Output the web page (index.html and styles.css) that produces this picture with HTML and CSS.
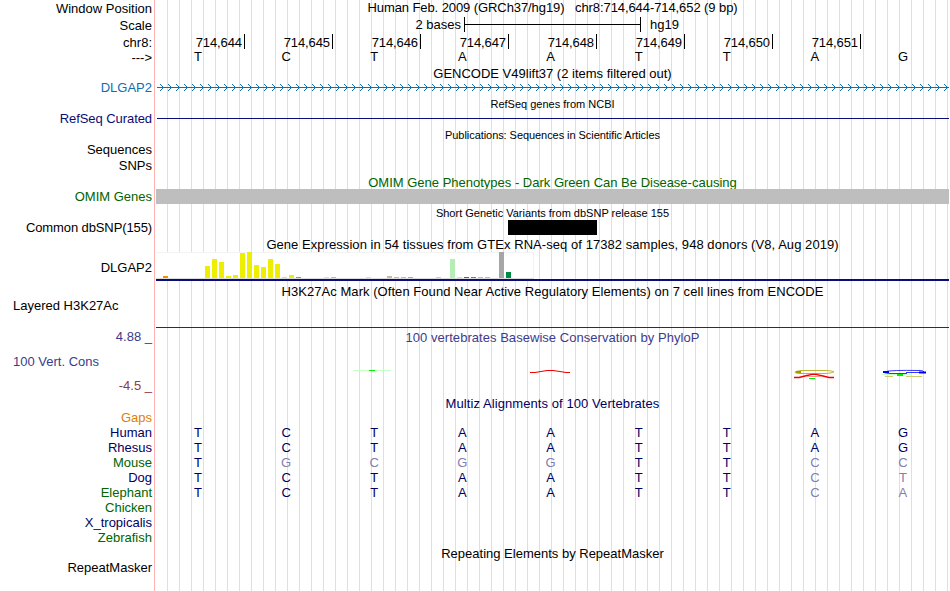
FILE: index.html
```
<!DOCTYPE html>
<html lang="en">
<head>
  <meta charset="UTF-8">
  <title>Human chr8:714,644-714,652 - Genome Browser</title>
  <link rel="stylesheet" href="styles.css">
</head>
<body>
  <main class="browser">
    <div class="row row-position">
      <div class="label">Window Position</div>
      <div class="track title t-position">Human Feb. 2009 (GRCh37/hg19) &nbsp; chr8:714,644-714,652 (9 bp)</div>
    </div>
    <div class="row row-scale">
      <div class="label">Scale</div>
      <div class="track scale">
        <span class="scale-size">2 bases</span>
        <span class="scale-bar"></span>
        <span>hg19</span>
      </div>
    </div>
    <div class="row row-ruler">
      <div class="label">chr8:</div>
      <div class="track ticks">
        <span>714,644</span><span>714,645</span><span>714,646</span><span>714,647</span><span>714,648</span><span>714,649</span><span>714,650</span><span>714,651</span>
      </div>
    </div>
    <div class="row row-bases">
      <div class="label">---&gt;</div>
      <div class="track bases">
        <span>T</span><span>C</span><span>T</span><span>A</span><span>A</span><span>T</span><span>T</span><span>A</span><span>G</span>
      </div>
    </div>

    <!-- GENCODE -->
    <div class="row row-gencode">
      <div class="label"></div>
      <div class="track title t-gencode">GENCODE V49lift37 (2 items filtered out)</div>
    </div>
    <div class="row">
      <div class="label blue">DLGAP2</div>
      <div class="track">
        <svg class="intron" width="793" height="15" shape-rendering="crispEdges">
          <defs>
            <pattern id="arrows" x="4" y="0" width="8" height="15" patternUnits="userSpaceOnUse">
              <path d="M0 4h1v1h-1zM1 5h1v1h-1zM2 6h1v1h-1zM2 8h1v1h-1zM1 9h1v1h-1zM0 10h1v1h-1z" fill="#0c6fb0"/>
            </pattern>
          </defs>
          <rect x="1" y="7" width="792" height="1" fill="#0c6fb0"/>
          <rect x="3" y="0" width="790" height="15" fill="url(#arrows)"/>
        </svg>
      </div>
    </div>

    <!-- RefSeq -->
    <div class="row row-small">
      <div class="label"></div>
      <div class="track title small t-refseq">RefSeq genes from NCBI</div>
    </div>
    <div class="row">
      <div class="label navy-light t-curated">RefSeq Curated</div>
      <div class="track"><div class="refseq-line"></div></div>
    </div>

    <!-- Publications -->
    <div class="row row-small">
      <div class="label"></div>
      <div class="track title small t-pubs">Publications: Sequences in Scientific Articles</div>
    </div>
    <div class="row">
      <div class="label">Sequences</div>
      <div class="track"></div>
    </div>
    <div class="row row-snps">
      <div class="label">SNPs</div>
      <div class="track"></div>
    </div>

    <!-- OMIM -->
    <div class="row row-omim">
      <div class="label"></div>
      <div class="track title green t-omim">OMIM Gene Phenotypes - Dark Green Can Be Disease-causing</div>
    </div>
    <div class="row">
      <div class="label green">OMIM Genes</div>
      <div class="track"><div class="omim-bar"></div></div>
    </div>

    <!-- dbSNP -->
    <div class="row row-small">
      <div class="label"></div>
      <div class="track title small t-dbsnp">Short Genetic Variants from dbSNP release 155</div>
    </div>
    <div class="row">
      <div class="label t-common">Common dbSNP(155)</div>
      <div class="track"><div class="snp-bar"></div></div>
    </div>

    <!-- GTEx -->
    <div class="row row-gtex-title">
      <div class="label"></div>
      <div class="track title t-gtex">Gene Expression in 54 tissues from GTEx RNA-seq of 17382 samples, 948 donors (V8, Aug 2019)</div>
    </div>
    <div class="row row-gtex">
      <div class="label">DLGAP2</div>
      <div class="track gtex">
        <svg width="378" height="27" shape-rendering="crispEdges">
          <rect width="378" height="27" fill="#f3f3f3"/>
          <rect y="1" width="377" height="25" fill="#fff"/>
          <rect y="26" width="378" height="1" fill="#dcdcdc"/>
          <rect x="7" y="24" width="5" height="2" fill="#ee9400"/>
          <g fill="#eeee00">
            <rect x="49" y="14" width="5" height="12"/>
            <rect x="56" y="7" width="5" height="19"/>
            <rect x="63" y="10" width="5" height="16"/>
            <rect x="70" y="24" width="5" height="2"/>
            <rect x="77" y="23" width="5" height="3"/>
            <rect x="84" y="1" width="5" height="25"/>
            <rect x="91" y="0" width="5" height="26"/>
            <rect x="98" y="13" width="5" height="13"/>
            <rect x="105" y="15" width="5" height="11"/>
            <rect x="112" y="7" width="5" height="19"/>
            <rect x="119" y="12" width="5" height="14"/>
            <rect x="126" y="25" width="5" height="1"/>
            <rect x="133" y="23" width="5" height="3"/>
          </g>
          <rect x="140" y="25" width="5" height="1" fill="#33bfb9"/>
          <rect x="168" y="25" width="5" height="1" fill="#eed5d2"/>
          <rect x="175" y="25" width="5" height="1" fill="#cdb79e"/>
          <rect x="210" y="25" width="5" height="1" fill="#eed5d2"/>
          <g fill="#cdb79e">
            <rect x="231" y="24" width="5" height="2"/>
            <rect x="238" y="25" width="5" height="1"/>
            <rect x="245" y="25" width="5" height="1"/>
          </g>
          <rect x="252" y="25" width="5" height="1" fill="#9acd32"/>
          <rect x="280" y="25" width="5" height="1" fill="#ffb6c1"/>
          <rect x="294" y="7" width="5" height="19" fill="#b4eeb4"/>
          <rect x="301" y="25" width="5" height="1" fill="#d9d9d9"/>
          <rect x="308" y="25" width="5" height="1" fill="#3a5fcd"/>
          <rect x="315" y="25" width="5" height="1" fill="#1e90ff"/>
          <rect x="322" y="25" width="5" height="1" fill="#cdb79e"/>
          <rect x="329" y="25" width="5" height="1" fill="#cdb79e"/>
          <rect x="343" y="0" width="5" height="26" fill="#a6a6a6"/>
          <rect x="350" y="20" width="5" height="6" fill="#008b45"/>
        </svg>
      </div>
    </div>

    <!-- H3K27Ac -->
    <div class="row row-h3k-title">
      <div class="label"></div>
      <div class="track title t-h3k">H3K27Ac Mark (Often Found Near Active Regulatory Elements) on 7 cell lines from ENCODE</div>
    </div>
    <div class="row row-h3k">
      <div class="label left">Layered H3K27Ac</div>
      <div class="track h3k"></div>
    </div>

    <!-- Conservation -->
    <div class="row row-phylop-title">
      <div class="label indigo">4.88 _</div>
      <div class="track title indigo t-phylop">100 vertebrates Basewise Conservation by PhyloP</div>
    </div>
    <div class="row row-phylop">
      <div class="label phylop-label">
        <span class="indigo left">100 Vert. Cons</span>
        <span class="maroon">-4.5 _</span>
      </div>
      <div class="track">
        <svg class="logo" width="793" height="48" fill="none">
          <path d="M197 24.500h38" stroke="#c4ffc4"/>
          <path d="M213 24.500h6" stroke="#00f000"/>
          <path d="M374 26.500h5l6-1 6-1h6l7 1 6 1h4" stroke="#f00000" stroke-width="1.100"/>
          <path d="M645 24.500h25q6 .3 8 1.200q-2 1.500-8 1.800h-27q-5-.5-4-1.500t6-1.500z" stroke="#b4ae20" stroke-width=".9"/>
          <path d="M640 26h5" stroke="#a09a00" stroke-width="2"/>
          <path d="M638 31.500h5l8-2 5-1.200h4l7 1.700 6 1.500h5" stroke="#f00000" stroke-width="1.300"/>
          <path d="M650 30.500h16" stroke="#ff8080" stroke-width=".8"/>
          <path d="M653 32.500h6" stroke="#00f000"/>
          <path d="M764 24.500q-30-.5-35 1.200q-3 1.300 5 1.800h17M764 24.500q4 .2 4 1.500M750 26.500h14" stroke="#2020f0" stroke-width=".9"/>
          <path d="M727 26h6M763 26.500h7" stroke="#0000f0" stroke-width="2"/>
          <path d="M726 28.500h30" stroke="#c4ffc4"/>
          <path d="M741 29h6" stroke="#00f000" stroke-width="2"/>
          <path d="M729 30.500h8M750 30.500h16" stroke="#d0cd70"/>
        </svg>
      </div>
    </div>

    <!-- Multiz alignment -->
    <div class="row row-multiz-title">
      <div class="label"></div>
      <div class="track title navy t-multiz">Multiz Alignments of 100 Vertebrates</div>
    </div>
    <div class="row">
      <div class="label orange">Gaps</div>
      <div class="track"></div>
    </div>
    <div class="row navy">
      <div class="label">Human</div>
      <div class="track bases">
        <span>T</span><span>C</span><span>T</span><span>A</span><span>A</span><span>T</span><span>T</span><span>A</span><span>G</span>
      </div>
    </div>
    <div class="row navy">
      <div class="label">Rhesus</div>
      <div class="track bases">
        <span>T</span><span>C</span><span>T</span><span>A</span><span>A</span><span>T</span><span>T</span><span>A</span><span>G</span>
      </div>
    </div>
    <div class="row navy">
      <div class="label green">Mouse</div>
      <div class="track bases">
        <span>T</span><span class="diff">G</span><span class="diff">C</span><span class="diff">G</span><span class="diff">G</span><span>T</span><span>T</span><span class="diff">C</span><span class="diff">C</span>
      </div>
    </div>
    <div class="row navy">
      <div class="label">Dog</div>
      <div class="track bases">
        <span>T</span><span>C</span><span>T</span><span>A</span><span>A</span><span>T</span><span>T</span><span class="diff">C</span><span class="diff">T</span>
      </div>
    </div>
    <div class="row navy">
      <div class="label green">Elephant</div>
      <div class="track bases">
        <span>T</span><span>C</span><span>T</span><span>A</span><span>A</span><span>T</span><span>T</span><span class="diff">C</span><span class="diff">A</span>
      </div>
    </div>
    <div class="row">
      <div class="label green">Chicken</div>
      <div class="track"></div>
    </div>
    <div class="row">
      <div class="label navy">X_tropicalis</div>
      <div class="track"></div>
    </div>
    <div class="row">
      <div class="label green">Zebrafish</div>
      <div class="track"></div>
    </div>

    <!-- RepeatMasker -->
    <div class="row row-repeat-title">
      <div class="label"></div>
      <div class="track title t-repeat">Repeating Elements by RepeatMasker</div>
    </div>
    <div class="row">
      <div class="label">RepeatMasker</div>
      <div class="track"></div>
    </div>
  </main>
</body>
</html>
```
FILE: styles.css
```
body {
  margin: 0;
  background: #fff;
  color: #000;
  font-family: "Liberation Sans", Arial, Helvetica, sans-serif;
  font-size: 13px;
  line-height: 15px;
}

/* pink divider + vertical guide lines */
.browser {
  width: 949px;
  height: 591px;
  overflow: hidden;
  background:
    linear-gradient(#ffb4b4, #ffb4b4) 154px 0 / 1px 100% no-repeat,
    repeating-linear-gradient(to right, transparent 0 11px, #dcdcf8 11px 12px) 156px 0 / 793px 100% no-repeat;
}

.row {
  display: grid;
  grid-template-columns: 156px 793px;
  grid-template-rows: 100%;
  height: 15px;
}

.label {
  padding-right: 4px;
  text-align: right;
  white-space: nowrap;
}

.label.left {
  padding-left: 13px;
  text-align: left;
}

.track {
  min-width: 0;
}

.title {
  text-align: center;
  white-space: nowrap;
}

.small {
  font-size: 11px;
}

/* row heights */
.row-position { height: 16px; line-height: 16px; }
.row-position .label { line-height: 18px; }
.row-scale { height: 17px; line-height: 18px; }
.row-scale .label { line-height: 20px; }
.row-ruler { height: 17px; line-height: 19px; }
.row-bases { height: 15px; }
.row-bases .bases { line-height: 13px; }
.row-gencode { line-height: 17px; }
.row-small { height: 16px; line-height: 19px; }
.row-snps { height: 16px; line-height: 17px; }
.row-omim { height: 16px; line-height: 20px; }
.row-gtex-title { height: 17px; line-height: 20px; }
.row-gtex { height: 29px; line-height: 31px; }
.row-h3k-title { height: 17px; line-height: 22px; }
.row-h3k { height: 30px; }
.row-phylop-title { height: 18px; line-height: 18px; }
.row-phylop-title .title { line-height: 20px; }
.row-phylop { height: 49px; }
.row-multiz-title { height: 15px; line-height: 17px; }
.row-repeat-title { line-height: 17px; }

/* text fitting */
.t-position { letter-spacing: -0.085px; }
.t-pubs { letter-spacing: -0.06px; }
.t-gtex { letter-spacing: 0.055px; }
.t-h3k { letter-spacing: 0.05px; }
.t-phylop { letter-spacing: 0.04px; }
.t-multiz { letter-spacing: 0.08px; }
.t-curated { letter-spacing: -0.07px; }
.t-common { letter-spacing: -0.11px; }

/* scale and ruler */
.scale {
  display: flex;
}

.scale-size {
  width: 305px;
  margin-right: 3px;
  text-align: right;
}

.scale-bar {
  box-sizing: border-box;
  width: 177px;
  height: 15px;
  margin: 1px 9px 0 0;
  border: solid #000;
  border-width: 0 1px;
  background: linear-gradient(#000, #000) 0 7px / 100% 1px no-repeat;
}

.ticks {
  display: grid;
  grid-template-columns: repeat(8, 88px);
  padding-left: 1px;
}

.ticks span {
  height: 15px;
  margin-top: 1px;
  padding-right: 2px;
  border-right: 1px solid #000;
  line-height: 17px;
  letter-spacing: -0.1px;
  text-align: right;
}

.bases {
  display: grid;
  grid-template-columns: repeat(9, 1fr);
  margin-left: -2px;
  margin-right: 2px;
  text-align: center;
}

.diff {
  color: #8080b0;
}

/* track items */
.intron,
.gtex svg,
.logo {
  display: block;
}

.refseq-line {
  height: 1px;
  margin: 7px 0 0 1px;
  background: #0c0c78;
}

.omim-bar {
  height: 15px;
  background: #bebebe;
}

.snp-bar {
  width: 89px;
  height: 15px;
  margin-left: 352px;
  background: #000;
}

.gtex {
  border-bottom: 2px solid #0c0c78;
}

.h3k {
  border-bottom: 1px solid #4a2040;
}

.phylop-label {
  display: flex;
  flex-direction: column;
  justify-content: space-between;
  padding-top: 8px;
  padding-bottom: 2px;
}

.phylop-label .left {
  padding-left: 13px;
  text-align: left;
}

/* colours */
.blue { color: #0c6fb0; }
.navy { color: #000064; }
.navy-light { color: #0c0c78; }
.green { color: #006400; }
.indigo { color: #3c3c8c; }
.maroon { color: #8c3c3c; }
.orange { color: #e08000; }
```
